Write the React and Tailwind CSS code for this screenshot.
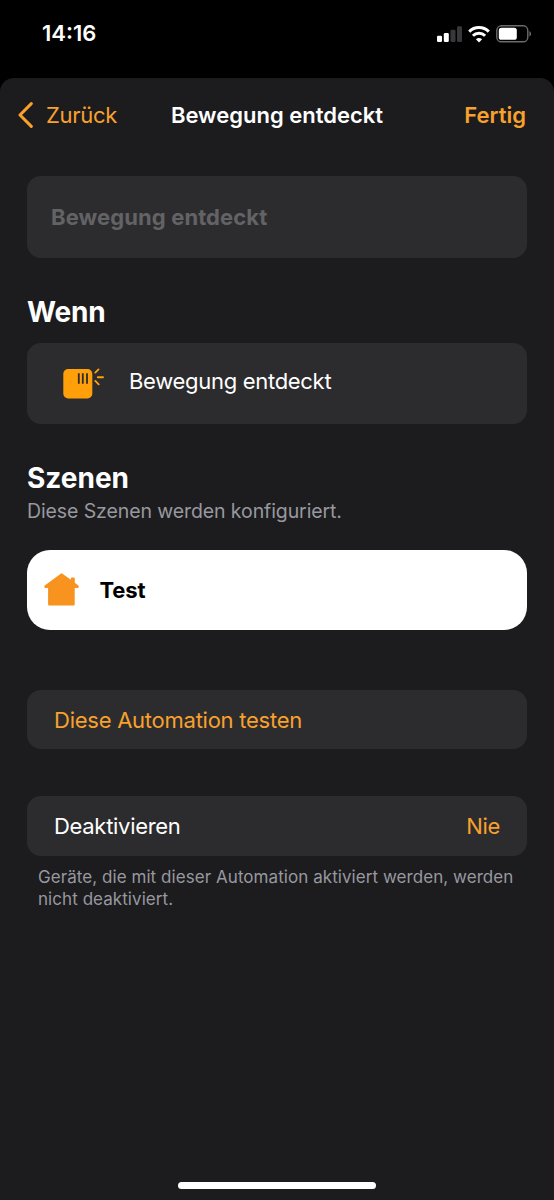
function SignalIcon() {
  return (
    <svg width="26" height="17" viewBox="0 0 26 17">
      <rect x="0" y="9.7" width="5" height="6.3" rx="1.3" fill="#fff" />
      <rect x="6.8" y="7" width="5" height="9" rx="1.3" fill="#fff" />
      <rect x="13.5" y="3.7" width="5" height="12.3" rx="1.3" fill="#38383a" />
      <rect x="20" y="0.3" width="5" height="15.7" rx="1.3" fill="#38383a" />
    </svg>
  )
}

function WifiIcon() {
  return (
    <svg width="22" height="17" viewBox="0 0 22 17" fill="none" stroke="#fff" strokeWidth="3">
      <path d="M1.2 5.6a14 14 0 0 1 19.6 0" />
      <path d="M4.9 9.7a8.7 8.7 0 0 1 12.2 0" />
      <path d="M11 16.4 7.9 13.3a4.6 4.6 0 0 1 6.2 0z" fill="#fff" stroke="none" />
    </svg>
  )
}

function BatteryIcon() {
  return (
    <svg width="36" height="18" viewBox="0 0 36 18">
      <rect x="0.8" y="0.8" width="31" height="16" rx="4.6" fill="none" stroke="#6b6b6e" strokeWidth="1.4" />
      <rect x="2.8" y="2.8" width="18" height="12" rx="2.6" fill="#fff" />
      <path d="M33.4 6.2c2.2.6 2.2 4.6 0 5.2z" fill="#6b6b6e" />
    </svg>
  )
}

function MotionSensorIcon() {
  return (
    <svg width="42" height="32" viewBox="0 0 42 32">
      <rect x="0.3" y="1" width="29" height="29.5" rx="4.8" fill="#ff9f0a" />
      <path d="M15.8 5.2v10.6M19.8 5.2v10.6M24 5.2v10.6" stroke="#2c2c2e" strokeWidth="1.8" />
      <path
        d="m32.3 4.6 3.2-3.2M34.8 9.2h5.2M32.3 12.9l3.4 3.4"
        stroke="#ff9f0a"
        strokeWidth="1.9"
        strokeLinecap="round"
      />
    </svg>
  )
}

function HouseIcon() {
  return (
    <svg width="36" height="34" viewBox="0 0 36 34" fill="#f7931e" stroke="#f7931e" strokeLinejoin="round">
      <path
        d="M17.6 1.2 1.3 13.2v.9h3.7v17.5h24.8V14.1h4v-.9l-3.9-3V5.4h-2.1v3.2z"
        strokeWidth="1.8"
      />
    </svg>
  )
}

function StatusBar() {
  return (
    <div className="flex h-[78px] items-start justify-between pr-[22px] pl-[42px]">
      <span className="mt-[18px] text-[22px] leading-[30px] font-semibold">14:16</span>
      <div className="mt-[25px] flex items-center gap-[5px]">
        <div className="flex items-center gap-[5px] pr-px">
          <SignalIcon />
          <WifiIcon />
        </div>
        <BatteryIcon />
      </div>
    </div>
  )
}

function NavBar() {
  return (
    <div className="flex h-[74px] items-center justify-between pr-7 pl-[18px] text-[22px]">
      <button type="button" className="flex w-[152px] items-center gap-[13px] tracking-[-0.3px] text-[#f9a12d]">
        <svg width="15" height="26" viewBox="0 0 15 26" fill="none" stroke="#f9a12d" strokeWidth="3">
          <path d="M13.3 1.6 2 13l11.3 11.4" strokeLinecap="round" strokeLinejoin="round" />
        </svg>
        Zurück
      </button>
      <h1 className="font-semibold whitespace-nowrap">Bewegung entdeckt</h1>
      <button type="button" className="w-[142px] text-right font-semibold text-[#f9a12d]">
        Fertig
      </button>
    </div>
  )
}

export default function App() {
  return (
    <div className="flex h-[1200px] w-[554px] flex-col overflow-hidden bg-black font-['Inter','Liberation_Sans',sans-serif] text-white">
      <StatusBar />

      <div className="flex flex-1 flex-col rounded-t-[14px] bg-[#1c1c1e]">
        <NavBar />

        <main className="flex flex-1 flex-col px-[27px] pt-6">
          <div className="flex h-[82px] items-center rounded-[14px] bg-[#2c2c2e] px-6 text-[22px] font-bold tracking-[0.1px] text-[#636366]">
            Bewegung entdeckt
          </div>

          <h2 className="mt-9 text-[28px] leading-9 font-bold tracking-[-0.2px]">Wenn</h2>
          <div className="mt-[13px] flex h-[81px] items-center rounded-[14px] bg-[#2c2c2e] pb-1 pl-9 text-[22px] tracking-[-0.3px]">
            <div className="mt-[5px] w-[66px]">
              <MotionSensorIcon />
            </div>
            Bewegung entdeckt
          </div>

          <h2 className="mt-9 text-[28px] leading-9 font-bold">Szenen</h2>
          <p className="mt-[3px] text-[19.5px] leading-[25px] tracking-[-0.1px] text-[#98989f]">
            Diese Szenen werden konfiguriert.
          </p>
          <div className="mt-[26px] flex h-20 items-center rounded-[23px] bg-white pl-[17px] text-[22px] font-bold tracking-[-0.1px] text-black">
            <div className="w-[55.5px]">
              <HouseIcon />
            </div>
            Test
          </div>

          <button
            type="button"
            className="mt-[60px] flex h-[59px] items-center rounded-[14px] bg-[#2c2c2e] px-[27px] pt-px text-[22px] tracking-[-0.25px] text-[#f9a12d]"
          >
            Diese Automation testen
          </button>

          <div className="mt-[47px] flex h-[60px] items-center justify-between rounded-[14px] bg-[#2c2c2e] px-[27px] text-[22px] tracking-[-0.3px]">
            <span>Deaktivieren</span>
            <span className="text-[#f9a12d]">Nie</span>
          </div>
          <p className="mt-[11px] ml-[11px] text-[17px] leading-[21.5px] tracking-[0.06px] text-[#98989f]">
            Geräte, die mit dieser Automation aktiviert werden, werden
            <br />
            nicht deaktiviert.
          </p>
        </main>

        <div className="mx-auto mb-[11px] h-[7px] w-[198px] rounded-full bg-white" />
      </div>
    </div>
  )
}
